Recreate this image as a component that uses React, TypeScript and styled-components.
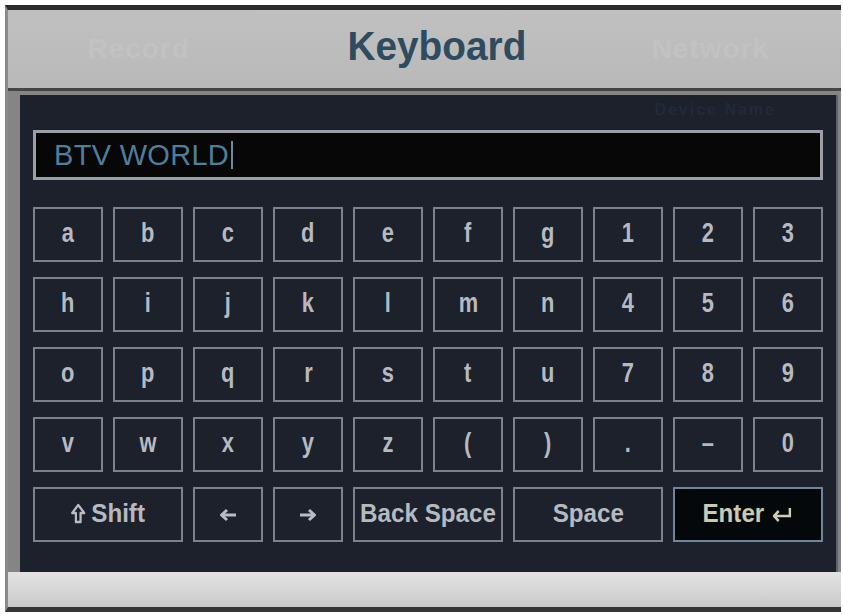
import styled, { createGlobalStyle } from 'styled-components';

const GlobalStyle = createGlobalStyle`
    html, body {
        margin: 0;
        padding: 0;
        background: #ffffff;
    }
    body {
        font-family: "Liberation Sans", Arial, sans-serif;
    }
`;

const charRows = [
    ['a', 'b', 'c', 'd', 'e', 'f', 'g', '1', '2', '3'],
    ['h', 'i', 'j', 'k', 'l', 'm', 'n', '4', '5', '6'],
    ['o', 'p', 'q', 'r', 's', 't', 'u', '7', '8', '9'],
    ['v', 'w', 'x', 'y', 'z', '(', ')', '.', '–', '0'],
];

const ShiftIcon = () => (
    <svg width="16" height="22" viewBox="0 0 16 22" fill="none" stroke="#b9bdc3" strokeWidth="2.4">
        <path d="M8 2 L14.5 10 H10.5 V19 H5.5 V10 H1.5 Z" strokeLinejoin="round" />
    </svg>
);

const Arrow = ({ dir }: { dir: 'left' | 'right' }) => (
    <svg width="20" height="16" viewBox="0 0 20 16" fill="none" stroke="#b9bdc3" strokeWidth="3">
        {dir === 'left' ? (
            <>
                <path d="M18 8 H4" />
                <path d="M9 3 L3.5 8 L9 13" strokeLinejoin="round" />
            </>
        ) : (
            <>
                <path d="M2 8 H16" />
                <path d="M11 3 L16.5 8 L11 13" strokeLinejoin="round" />
            </>
        )}
    </svg>
);

const EnterIcon = () => (
    <svg width="26" height="18" viewBox="0 0 26 18" fill="none" stroke="#cfcdb4" strokeWidth="2.6">
        <path d="M22 3 V11 H6" />
        <path d="M10 6 L5 11 L10 16" strokeLinejoin="round" />
    </svg>
);

const App = () => {
    return (
        <>
            <GlobalStyle />
            <Frame>
                <Header>
                    <GhostTab>Record</GhostTab>
                    <Title>Keyboard</Title>
                    <GhostTab>Network</GhostTab>
                </Header>
                <Body>
                    <Panel>
                        <PanelGhost>Device Name</PanelGhost>
                        <InputBox>
                            <InputText>BTV WORLD</InputText>
                            <Caret />
                        </InputBox>
                        <KeyGrid>
                            {charRows.flat().map((label, i) => (
                                <Key key={i}>
                                    <Label>{label}</Label>
                                </Key>
                            ))}
                            <Key $span={2}>
                                <WideLabel>
                                    <ShiftIcon />
                                    Shift
                                </WideLabel>
                            </Key>
                            <Key>
                                <Arrow dir="left" />
                            </Key>
                            <Key>
                                <Arrow dir="right" />
                            </Key>
                            <Key $span={2}>
                                <WideLabel>Back Space</WideLabel>
                            </Key>
                            <Key $span={2}>
                                <WideLabel>Space</WideLabel>
                            </Key>
                            <Key $span={2} $active>
                                <WideLabel $active>
                                    Enter
                                    <EnterIcon />
                                </WideLabel>
                            </Key>
                        </KeyGrid>
                    </Panel>
                    <Footer />
                </Body>
            </Frame>
        </>
    );
};

const Frame = styled.div`
    margin: 5px 2px 0 5px;
    height: 597px;
    border-top: 5px solid #2b2b2b;
    border-bottom: 5px solid #353535;
    border-left: 3px solid #8a8a8a;
    background: #c4c4c4;
    display: flex;
    flex-direction: column;
`;

const Header = styled.div`
    height: 78px;
    flex-shrink: 0;
    display: grid;
    grid-template-columns: 1fr auto 1fr;
    align-items: center;
    background: linear-gradient(180deg, #c0c0c0 0%, #bcbcbc 60%, #b9b9b9 100%);
    border-bottom: 3px solid #454545;
`;

const GhostTab = styled.div`
    font-size: 28px;
    font-weight: 700;
    color: #c2c2c2;
    text-align: center;
    letter-spacing: 1px;
`;

const Title = styled.div`
    font-size: 40px;
    font-weight: 700;
    color: #2f4b5f;
    padding: 0 50px 6px 76px;
    transform: scaleX(0.97);
`;

const Body = styled.div`
    flex: 1;
    display: flex;
    flex-direction: column;
    background: #858585;
    padding: 4px 0 0 12px;
`;

const Panel = styled.div`
    position: relative;
    width: 818px;
    height: 477px;
    box-sizing: border-box;
    background: #1c212c;
    border-right: 2px solid #5d6470;
    padding: 35px 0 0 13px;
`;

const PanelGhost = styled.div`
    position: absolute;
    top: 6px;
    right: 60px;
    font-size: 16px;
    font-weight: 700;
    color: #212a3a;
    letter-spacing: 2px;
`;

const InputBox = styled.div`
    width: 790px;
    height: 50px;
    box-sizing: border-box;
    border: 3px solid #9ca0a6;
    background: #070707;
    display: flex;
    align-items: center;
    padding-left: 18px;
`;

const InputText = styled.span`
    font-size: 29px;
    color: #4d7e9c;
    letter-spacing: 0.3px;
`;

const Caret = styled.span`
    width: 2px;
    height: 28px;
    margin-left: 2px;
    background: #6d8aa0;
`;

const KeyGrid = styled.div`
    margin-top: 27px;
    display: grid;
    grid-template-columns: repeat(10, 70px);
    grid-auto-rows: 55px;
    gap: 15px 10px;
`;

const Key = styled.div<{ $span?: number; $active?: boolean }>`
    grid-column: span ${({ $span }) => $span ?? 1};
    box-sizing: border-box;
    border: 2px solid ${({ $active }) => ($active ? '#6f8598' : '#7c828b')};
    background: ${({ $active }) => ($active ? '#05080b' : '#1c212c')};
    display: flex;
    align-items: center;
    justify-content: center;
    overflow: hidden;
`;

const Label = styled.span`
    font-size: 28px;
    font-weight: 700;
    color: #b6bac0;
    transform: scaleX(0.78);
    padding-bottom: 4px;
`;

const WideLabel = styled.span<{ $active?: boolean }>`
    display: flex;
    align-items: center;
    gap: 6px;
    font-size: 26px;
    font-weight: 700;
    white-space: nowrap;
    color: ${({ $active }) => ($active ? '#cbc9b0' : '#b6bac0')};
    transform: scaleX(0.93);
    padding-bottom: 2px;
`;

const Footer = styled.div`
    flex: 1;
    margin-left: -12px;
    background: linear-gradient(180deg, #e2e2e2 0%, #d6d6d6 55%, #c9c9c9 100%);
`;

export default App;
